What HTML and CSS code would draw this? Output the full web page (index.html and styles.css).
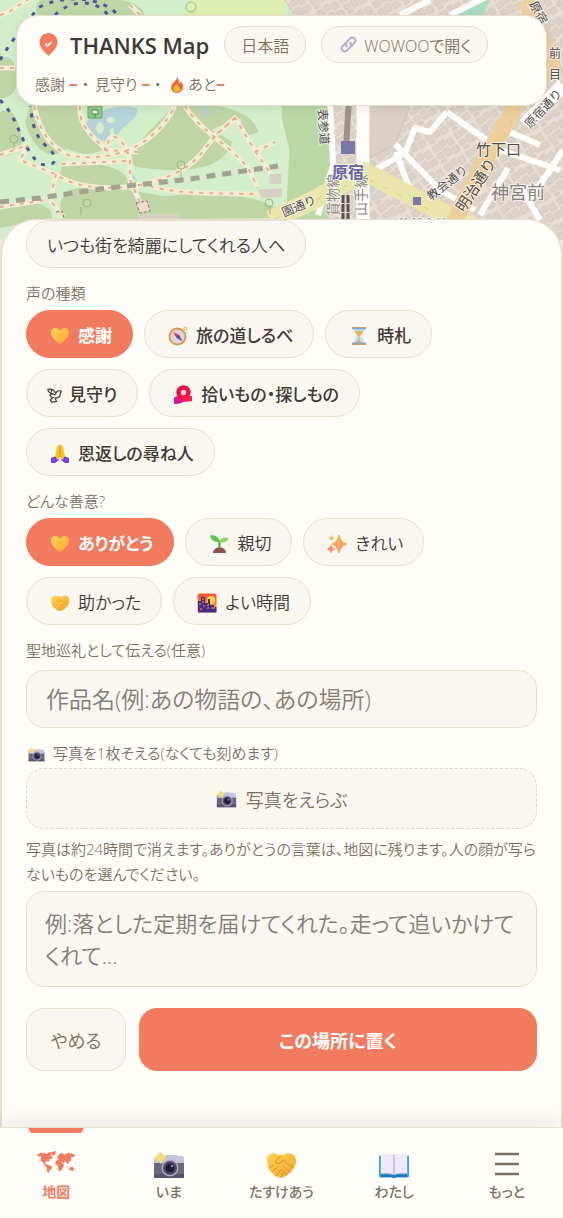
FILE: index.html
```html
<!DOCTYPE html>
<html lang="ja">
<head>
    <meta charset="UTF-8">
    <meta name="viewport" content="width=device-width, initial-scale=1">
    <title>THANKS Map</title>
    <link rel="stylesheet" href="styles.css">
</head>
<body>
    <!-- icons -->
    <svg class="defs" aria-hidden="true">
        <defs>
            <linearGradient id="gold" x1="0" y1="0" x2="1" y2="1"><stop offset="0" stop-color="#ffd655"/><stop offset="1" stop-color="#f5a52d"/></linearGradient>
            <linearGradient id="spark" x1="0" y1="0" x2="0" y2="1"><stop offset="0" stop-color="#f9c440"/><stop offset="1" stop-color="#ff8a76"/></linearGradient>
            <linearGradient id="sky" x1="0" y1="0" x2="0" y2="1"><stop offset="0" stop-color="#f0523f"/><stop offset="1" stop-color="#ffad35"/></linearGradient>
            <symbol id="heart" viewBox="0 0 20 20"><path fill="url(#gold)" d="M10 18C7 16 1 11.500 1 6.500C1 3.500 3 2 5.500 2C7.500 2 9.200 3.200 10 5C10.800 3.200 12.500 2 14.500 2C17 2 19 3.500 19 6.500C19 11.500 13 16 10 18Z"/></symbol>
            <symbol id="compass" viewBox="0 0 20 20"><circle cx="17.500" cy="2.500" r="1.600" fill="none" stroke="#e8a33a"/><circle cx="9.500" cy="10.500" r="8" fill="#dcd4e8" stroke="#d99b45" stroke-width="2"/><path d="M5 6L11.500 9L8.500 12Z" fill="#d9485b"/><path d="M14.500 15.500L11.500 9L8.500 12Z" fill="#6b5fb0"/><circle cx="10" cy="10.500" r="1.200" fill="#54427a"/></symbol>
            <symbol id="glass" viewBox="0 0 20 20"><path d="M5 3H15C15 7 13.500 8.500 11.500 10C13.500 11.500 15 13.500 15 17H5C5 13.500 6.500 11.500 8.500 10C6.500 8.500 5 7 5 3Z" fill="#b9e3fa"/><path d="M6 5H14C13.500 7.500 12 8.500 10.500 10V14L14 17H6L9.500 14V10C8 8.500 6.500 7.500 6 5Z" fill="#f2b24b"/><path d="M3 1H17V3.500H3ZM3 16.500H17V19H3Z" fill="#8ba9cf"/><path d="M3 1H17V2H3ZM3 18H17V19H3Z" fill="#c99b66"/></symbol>
            <symbol id="dove" viewBox="0 0 20 20"><path d="M1 3C5 2 9 3 11 8C12 5 14 4 18 5L16.500 8C17 12 14 14 10 14L12 18L6 19L4 16L8 13C5 13 4 11 4 9L8 9L2 6ZM5 3L6 6M8 9L11 10" fill="none" stroke="#3d3935" stroke-width="1.500" stroke-linejoin="round"/></symbol>
            <symbol id="knot" viewBox="0 0 20 20"><path d="M1 13C4 10 11 10 14 14C11 18 6 19 1 19Z" fill="#dc1592"/><circle cx="10.500" cy="7.500" r="5" fill="#f9cfd6" stroke="#e71445" stroke-width="4.500"/><path d="M8 11L19 11V16L12 17Z" fill="#ff1c43"/></symbol>
            <symbol id="pray" viewBox="0 0 20 20"><path d="M1 14L6 12L9 16L5 19H1Z" fill="#7938f3"/><path d="M19 14L14 12L11 16L15 19H19Z" fill="#7938f3"/><path d="M9.700 0.500C7.500 0.500 7 3 6.500 6L5 12L7.500 16L10 13L12.500 16L15 12L13.500 6C13 3 12.500 0.500 10.300 0.500Z" fill="#ffc12e"/><path d="M10 2V13" stroke="#e69419"/></symbol>
            <symbol id="sprout" viewBox="0 0 20 20"><path d="M4 19C4 15.500 7 13.500 10.500 13.500C14 13.500 17 15.500 17 19Z" fill="#8a5350"/><path d="M10.500 14V6.500" stroke="#44ad3c" stroke-width="2"/><path d="M10.500 8C5 9 1.500 5 1 1.500C6 0.500 10 3 10.500 8Z" fill="#5cc451"/><path d="M10.500 8C11 4 15 2.500 19.500 4C18.500 8 14 9.500 10.500 8Z" fill="#86d95c"/></symbol>
            <symbol id="sparkle" viewBox="0 0 20 20"><path d="M12 1Q13.500 8 19.500 10Q13.500 12 12 19Q10.500 12 5 10Q10.500 8 12 1Z" fill="url(#spark)" stroke="#fca75c"/><path d="M4.500 1Q5 3.500 7.500 4Q5 4.500 4.500 7Q4 4.500 1.500 4Q4 3.500 4.500 1Z" fill="#e6b25d"/><path d="M4 11.500Q4.500 14.500 7.500 15Q4.500 15.500 4 18.500Q3.500 15.500 0.500 15Q3.500 14.500 4 11.500Z" fill="#ff8577" stroke="#ff8577"/></symbol>
            <symbol id="shake" viewBox="0 0 34 30"><path d="M2 11C1 5 6 1 12 3L17 5L22 3C28 1 34 5 33 12C32 18 28 23 22 27C17 30 11 28 8 24C4 21 2 16 2 11Z" fill="url(#gold)"/><path d="M17 5L11 11C12 15 17 13 19 10L30 18M5 18L9 15M8 22L13 17M12 26L17 20M17 28L20 23M26 22L20 17M23 25L18 20" fill="none" stroke="#e39a26" stroke-width="1.200" stroke-linecap="round"/></symbol>
            <symbol id="city" viewBox="0 0 20 20"><rect x="0.500" y="0.500" width="19" height="19" rx="2" fill="url(#sky)"/><circle cx="14" cy="7" r="4" fill="#ffd348"/><path d="M1 8H4V4H8V10H11V6H13V12H17V14H19.500V19.500H1Z" fill="#4a2a7c"/><path d="M5 6H7M5 9H7M2 11H4M6 13H8M10 12H12M10 15H12M14 15H18M3 16H5" stroke="#fe9d79" stroke-width="1.200"/></symbol>
            <symbol id="camera" viewBox="0 0 32 28"><path d="M1 9H31V26H1Z" fill="#6b6679"/><path d="M1 12V8Q1 6 3 6H10L13 4H24L26 5H29Q31 5 31 8V12Z" fill="#c5c2dc"/><path d="M1 23H31V27H1Z" fill="#57536a"/><circle cx="17" cy="17" r="8.500" fill="#b2adc8"/><circle cx="17" cy="17" r="7" fill="#504b68"/><circle cx="17" cy="17" r="4.500" fill="#211b36"/><circle cx="19" cy="15" r="1.300" fill="#918ab6"/><path d="M7 1L13 6L8 13L2 7Z" fill="#fbda73"/></symbol>
            <symbol id="book" viewBox="0 0 34 28"><path d="M1 4H33V27H1Z" fill="#3ba5df"/><path d="M3 24H31V27H20L17 28L14 27H3Z" fill="#1979bc"/><path d="M3 3Q10 1 17 3Q24 1 31 3V23Q24 22 17 24Q10 22 3 23Z" fill="#f0eaf8"/><path d="M17 3V24" stroke="#bcb1d0" stroke-width="1.500"/><path d="M3 23Q10 22 17 24Q24 22 31 23" fill="none" stroke="#c9bddb"/></symbol>
            <symbol id="world" viewBox="0 0 44 24"><path fill="#f27a5f" d="M1 4L5 2L12 3L15 1L18 2L16 5L19 7L15 9L14 12L11 11L10 14L13 15L18 17L17 20L15 21L14 24L12 22L12 18L10 16L8 13L5 10L6 6L3 6ZM17 1L22 0L21 4L18 5ZM23 7L25 4L28 2L31 4L36 2L43 4L42 6L38 7L39 10L36 12L35 15L32 11L30 14L28 11L29 14L31 15L28 21L25 22L24 16L21 14L22 11L25 9ZM34 16L36 17L35 18ZM37 18L40 17L42 20L40 22L36 20ZM43 22L44 21L44 23ZM2 11L4 11L3 12Z"/></symbol>
            <symbol id="flame" viewBox="0 0 16 18"><path d="M8 0C8 4 3 5 1.500 10C0.500 15 4 18 8 18C13 18 15.500 14 14.500 9C14 7 13.500 5.500 12 5C12 7 11 8 10.500 7C10 4 10 2 8 0Z" fill="#f5632f"/><path d="M8 7C5 10 3.500 12 4 15C5 17.500 11 18 12 14.500C12.500 12 9 11 8 7Z" fill="#ffbc38"/></symbol>
            <symbol id="link" viewBox="0 0 18 18"><g fill="none" stroke="#b8acd0" stroke-width="2.200" stroke-linecap="round"><path d="M7 11C5.500 9.500 5.500 8 7 6.500L11 2.500C14 0 18 4 15.500 7L12 10.500"/><path d="M11 7C12.500 8.500 12.500 10 11 11.500L7 15.500C4 18 0 14 2.500 11L6 7.500"/></g></symbol>
            <pattern id="houses" width="26" height="22" patternUnits="userSpaceOnUse" patternTransform="rotate(-32)"><rect width="26" height="22" fill="#e7dfd6"/><path d="M2 2H9V8H2ZM11 1H16V7H11ZM18 3H24V10H18ZM2 11H8V16H2ZM10 10H16V18H10ZM18 13H25V19H18ZM3 18H8V21H3Z" fill="#dcd2c7" stroke="#cfc2b5" stroke-width="0.700"/></pattern>
            <!-- park footpaths, drawn twice: bed and dashes -->
            <g id="paths">
                <path d="M34 106C40 130 48 145 68 155C100 162 150 155 175 106M0 155L28 145L20 160L55 174C88 198 170 190 200 155L215 136L235 118L257 154L275 180"/>
                <path d="M80 106C78 125 93 138 107 150C108 125 125 139 130 160L130 180L142 207M185 106C202 133 230 145 248 168L258 188M62 164L128 161M150 186C180 195 220 193 260 194M56 174L50 200L63 217M0 207L45 200"/>
                <path d="M0 68H15M0 15C15 12 20 0 40 -5M130 5L140 15M104 150L138 152M235 118L213 137M255 152L275 142"/>
            </g>
        </defs>
    </svg>

    <main class="screen">
        <svg class="map" viewBox="0 0 563 240" preserveAspectRatio="xMidYMin slice" aria-label="原宿周辺の地図">
            <rect width="563" height="240" fill="#d2eecb"/>
            <!-- woods -->
            <g fill="#bfd5a6">
                <path d="M40 0H120C150 5 150 20 130 30H60C40 25 30 10 40 0ZM0 60C12 50 20 70 16 88C10 100 0 98 0 98Z"/>
                <path d="M0 112C12 105 20 120 22 142C18 158 0 156 0 156ZM30 106C55 102 55 130 66 150C45 165 30 140 25 122Z"/>
                <path d="M37 106H80C76 125 92 140 106 147C90 160 66 152 55 140ZM174 106H188C204 132 224 134 232 142C224 170 186 174 136 167C122 155 144 137 174 106ZM182 106C202 100 254 108 258 132C244 140 238 130 242 118L208 131Z"/>
                <path d="M62 165C85 160 130 165 128 184C100 190 75 185 60 176ZM70 190C110 180 145 196 170 196C220 188 282 200 282 218L66 220C56 208 60 198 70 190ZM0 210C20 196 55 202 52 218L0 228Z"/>
            </g>
            <path d="M190 0H284V45H184C175 30 183 12 190 0Z" fill="#dcefb0"/>
            <path d="M282 106H340V220H282Z" fill="#b9d8a5"/>
            <path d="M274 106L285 150L282 205" stroke="#d7edcb" stroke-width="9" fill="none"/>
            <path d="M86 124C94 108 122 104 137 108C139 122 120 124 116 139C104 146 91 137 86 124Z" fill="#b6d3d8"/>
            <g fill="#d2eecb"><ellipse cx="100" cy="128" rx="4" ry="6"/><ellipse cx="111" cy="120" rx="5" ry="3"/><ellipse cx="112" cy="133" rx="2" ry="5"/></g>
            <path d="M200 106C210 106 212 115 206 117ZM130 170L137 180L128 178Z" fill="#b1d0db"/>
            <!-- town -->
            <path d="M284 0H563V240H330V106L320 60Z" fill="url(#houses)"/>
            <path d="M461 8L490 0L482 16H455Z" fill="#a7ddc1"/>
            <path d="M369 106H410L394 145L370 158Z" fill="#dbd0c5" stroke="#cbbfb4"/>
            <g fill="none" stroke="#fffdfa" stroke-linejoin="round">
                <path d="M363 100V240" stroke-width="13"/>
                <path d="M330 100L333 165L318 215" stroke-width="6"/>
                <path d="M366 175L405 153L415 128L430 132L447 112M395 144L440 190L475 210M447 112L500 150L560 170M396 152L408 185L430 210M508 168L480 215M530 200L563 150" stroke-width="6"/>
                <path d="M400 15L430 0M450 15L490 -5M520 185L540 220M505 130L540 145" stroke-width="6"/>
            </g>
            <path d="M270 220L310 202L365 172L450 216L500 240" fill="none" stroke="#e9e5ab" stroke-width="19"/>
            <path d="M448 235L482 165L519 100L552 65L526 0" fill="none" stroke="#eccf9b" stroke-width="17"/>
            <path d="M470 205L519 106M370 180L430 210M275 219L350 184" fill="none" stroke="#d9c594" stroke-dasharray="5 10"/>
            <path d="M525 125L563 85" stroke="#fff" stroke-width="14"/>
            <use href="#paths" class="bed"/>
            <use href="#paths" class="dashes"/>
            <path d="M0 202L40 198L100 189L190 179L278 166" fill="none" stroke="#a3a293" stroke-width="5" stroke-dasharray="9 7"/>
            <g fill="none" stroke="#4b569f" stroke-width="3" stroke-dasharray="4 7"><path d="M0 60C15 35 25 25 38 8C60 -5 100 -5 118 15M0 100C20 120 18 140 38 163C55 170 62 158 45 145C32 132 33 120 30 106"/><path d="M55 15C70 0 95 -2 108 15"/></g>
            <path d="M88 106H102V118H88Z" fill="#91c68c" stroke="#66a767"/><path d="M92 110H98V114H92ZM95 114V118" fill="#eef5de" stroke="#4f8e50"/>
            <path d="M136 203L147 201L150 211L140 213ZM56 212L62 211L64 218" fill="#f0dccc" stroke="#867467" stroke-dasharray="3 2"/>
            <path d="M138 214H178L181 220H138ZM258 190L282 188V197L262 198ZM270 174H281V184H269Z" fill="#d5cfc4"/>
            <g fill="none" stroke="#9cb785"><circle cx="14" cy="139" r="4"/><path d="M14 143V150M81 207V215"/><circle cx="87" cy="203" r="4"/><circle cx="181" cy="165" r="4"/><path d="M181 169V177M270 207V214"/><circle cx="269" cy="203" r="4"/><circle cx="191" cy="7" r="5"/></g>
            <path d="M347 106L345 141M350 106L348 141" stroke="#9a938a" stroke-width="3"/>
            <path d="M343 195V220M348 195V220" stroke="#56514c" stroke-width="3" stroke-dasharray="8 1"/>
            <path d="M341 141H355V154H341ZM413 197H421V205H413Z" fill="#7878a8"/>
            <g class="map-text">
                <text transform="translate(338 216) rotate(-90)" class="rail">貨物線</text>
                <text transform="translate(366 216) rotate(-90)" class="rail">山手線</text>
                <text x="332" y="178" class="station">原宿</text>
                <text x="476" y="155" class="place">竹下口</text>
                <text x="491" y="199" class="area">神宮前</text>
                <text transform="translate(431 201) rotate(-38)" class="road">教会通り</text>
                <text transform="translate(464 213) rotate(-57)" class="road big">明治通り</text>
                <text transform="translate(530 129) rotate(-47)" class="road">原宿通り</text>
                <text transform="translate(284 217) rotate(-23)" class="road">園通り</text>
                <text transform="translate(318 109) rotate(86)" class="road">表参道</text>
                <text x="387" y="229" class="station small">明治神宮前</text>
                <text x="549" y="58" class="road">前</text>
                <text x="549" y="79" class="road">目</text>
                <text transform="translate(529 4) rotate(62)" class="road">原宿</text>
            </g>
        </svg>

        <header class="topbar">
            <div class="topbar-row">
                <svg class="pin" viewBox="0 0 18 23" aria-hidden="true"><path d="M9 0C14 0 18 4 18 9C18 15 12 20 9 23C6 20 0 15 0 9C0 4 4 0 9 0Z" fill="#f27a5f"/><path d="M6 11L8 13L12 9" fill="none" stroke="#fff" stroke-width="1.600" stroke-linecap="round"/></svg>
                <h1>THANKS Map</h1>
                <button class="mini">日本語</button>
                <button class="mini open"><svg aria-hidden="true"><use href="#link"/></svg>WOWOOで開く</button>
            </div>
            <p class="stats"><span>感謝 <b>–</b><i>・</i></span><span>見守り <b>–</b><i>・</i></span><span><svg aria-hidden="true"><use href="#flame"/></svg>あと<b>–</b></span></p>
        </header>

        <form class="sheet">
            <div class="chips">
                <button type="button" class="chip">いつも街を綺麗にしてくれる人へ</button>
            </div>

            <h2 class="label">声の種類</h2>
            <div class="chips kinds">
                <button type="button" class="chip on" aria-pressed="true"><svg aria-hidden="true"><use href="#heart"/></svg>感謝</button>
                <button type="button" class="chip"><svg aria-hidden="true"><use href="#compass"/></svg>旅の道しるべ</button>
                <button type="button" class="chip"><svg aria-hidden="true"><use href="#glass"/></svg>時札</button>
                <button type="button" class="chip slim"><svg aria-hidden="true"><use href="#dove"/></svg>見守り</button>
                <button type="button" class="chip"><svg aria-hidden="true"><use href="#knot"/></svg>拾いもの・探しもの</button>
                <button type="button" class="chip"><svg aria-hidden="true"><use href="#pray"/></svg>恩返しの尋ね人</button>
            </div>

            <h2 class="label">どんな善意?</h2>
            <div class="chips moods">
                <button type="button" class="chip on" aria-pressed="true"><svg aria-hidden="true"><use href="#heart"/></svg>ありがとう</button>
                <button type="button" class="chip"><svg aria-hidden="true"><use href="#sprout"/></svg>親切</button>
                <button type="button" class="chip"><svg aria-hidden="true"><use href="#sparkle"/></svg>きれい</button>
                <button type="button" class="chip"><svg aria-hidden="true"><use href="#shake"/></svg>助かった</button>
                <button type="button" class="chip"><svg aria-hidden="true"><use href="#city"/></svg>よい時間</button>
            </div>

            <label class="label" for="work">聖地巡礼として伝える(任意)</label>
            <input class="field" id="work" type="text" placeholder="作品名(例:あの物語の、あの場所)">

            <h2 class="label photo-label"><svg aria-hidden="true"><use href="#camera"/></svg>写真を1枚そえる(なくても刻めます)</h2>
            <button type="button" class="photo"><svg aria-hidden="true"><use href="#camera"/></svg>写真をえらぶ</button>
            <p class="help">写真は約24時間で消えます。ありがとうの言葉は、地図に残ります。人の顔が写らないものを選んでください。</p>

            <textarea class="field message" aria-label="メッセージ" rows="2" placeholder="例:落とした定期を届けてくれた。走って追いかけてくれて…"></textarea>

            <div class="actions">
                <button type="button" class="cancel">やめる</button>
                <button type="submit" class="submit">この場所に置く</button>
            </div>
        </form>
    </main>

    <nav class="tabs">
        <a href="#map" class="active" aria-current="page"><svg class="wide" aria-hidden="true"><use href="#world"/></svg>地図</a>
        <a href="#now"><svg aria-hidden="true"><use href="#camera"/></svg>いま</a>
        <a href="#help"><svg aria-hidden="true"><use href="#shake"/></svg>たすけあう</a>
        <a href="#me"><svg aria-hidden="true"><use href="#book"/></svg>わたし</a>
        <a href="#more"><svg viewBox="0 0 32 28" aria-hidden="true"><path d="M4 3H28M4 13H28M4 23H28" stroke="#7c7063" stroke-width="2.500"/></svg>もっと</a>
    </nav>
</body>
</html>
```
FILE: styles.css
```css
:root {
    --coral: #f27a5f;
    --paper: #fffef9;
    --cream: #faf6f0;
    --line: #e8decd;
    --ink: #3d3935;
    --muted: #7c7063;
}
* {
    box-sizing: border-box;
}
body {
    margin: 0;
    min-height: 100vh;
    display: flex;
    flex-direction: column;
    background: #eee8dd;
    color: var(--ink);
    font-family: "Open Sans", "Noto Sans CJK JP", sans-serif;
    font-weight: 350;
    font-feature-settings: "palt";
}
button, input, textarea {
    font: inherit;
    font-feature-settings: inherit;
    color: inherit;
}
button {
    cursor: pointer;
    white-space: nowrap;
}
h1, h2, p {
    margin: 0;
}
.defs {
    position: absolute;
    width: 0;
    height: 0;
}
.screen {
    position: relative;
    flex: 1;
    display: flex;
    flex-direction: column;
}

/* map */
.map {
    position: absolute;
    top: 0;
    left: 0;
    width: 100%;
    height: 240px;
}
.bed {
    fill: none;
    stroke: #f3edd2;
    stroke-width: 5px;
    stroke-linejoin: round;
}
.dashes {
    fill: none;
    stroke: #e9ab98;
    stroke-width: 2px;
    stroke-dasharray: 4 6;
}
.map-text {
    font-size: 13px;
    font-weight: 400;
    fill: #514b46;
    stroke: #fff;
    stroke-width: 2px;
    stroke-opacity: 0.7;
    paint-order: stroke;
    font-feature-settings: normal;
}
.station {
    font-size: 16px;
    font-weight: 700;
    fill: #6767a5;
}
.small {
    font-size: 12px;
}
.place {
    font-size: 15px;
}
.area {
    font-size: 18px;
    fill: #88817b;
}
.road {
    font-size: 12px;
}
.big {
    font-size: 15px;
}
.rail {
    font-size: 14px;
    fill: #8a8580;
}

/* header card */
.topbar {
    position: relative;
    margin: 15px 16px 0;
    padding: 10px 18px 8px;
    border: 1px solid var(--line);
    border-radius: 22px;
    background: var(--paper);
    box-shadow: 0 2px 8px rgba(90, 75, 50, 0.12);
}
.topbar-row {
    display: flex;
    align-items: center;
    gap: 15px;
}
.pin {
    width: 19px;
    height: 23px;
    margin: 0 -3px 0 4px;
}
h1 {
    font-size: 22px;
    line-height: 32px;
    font-weight: 600;
    white-space: nowrap;
}
.mini {
    display: flex;
    align-items: center;
    height: 37px;
    padding: 0 16px;
    border: 1px solid var(--line);
    border-radius: 19px;
    background: var(--cream);
    color: var(--muted);
    font-size: 16px;
}
.mini svg {
    width: 17px;
    height: 17px;
    margin: 0 7px 0 2px;
}
.stats {
    display: flex;
    gap: 2px;
    margin-top: 8px;
    font-size: 15px;
    line-height: 26px;
    color: var(--muted);
}
.stats b {
    color: var(--coral);
    font-size: 18px;
    line-height: 18px;
}
.stats i {
    font-style: normal;
    font-feature-settings: normal;
}
.stats svg {
    width: 14px;
    height: 16px;
    margin: 0 4px 0 3px;
    vertical-align: -3px;
}

/* bottom sheet */
.sheet {
    position: relative;
    display: flex;
    flex-direction: column;
    margin-top: auto;
    padding: 0 24px 56px;
    border: 1px solid var(--line);
    border-width: 1px 2px 0;
    border-radius: 36px 36px 0 0;
    background: var(--paper);
}
.chips {
    display: flex;
    flex-wrap: wrap;
    gap: 11px;
}
.chip {
    display: flex;
    align-items: center;
    height: 48px;
    padding: 0 20px;
    border: 1px solid var(--line);
    border-radius: 24px;
    background: var(--cream);
    font-size: 17px;
}
.chip svg {
    width: 20px;
    height: 20px;
    margin: 3px 8px 0 3px;
}
.chip.slim svg {
    width: 16px;
    height: 18px;
    margin: 3px 6px 0 0;
}
.kinds .chip {
    font-weight: 500;
}
.chips .on {
    border-color: var(--coral);
    background: var(--coral);
    color: #fff;
    font-weight: 700;
}
.label {
    margin: 14px 0 6px;
    color: var(--muted);
    font-size: 15px;
    line-height: 22px;
    font-weight: inherit;
}
.field {
    width: 100%;
    height: 58px;
    padding: 0 19px;
    border: 1px solid var(--line);
    border-radius: 18px;
    background: var(--cream);
    font-size: 23px;
    margin-top: 3px;
}
.field::placeholder {
    color: #827d77;
    opacity: 1;
}
.photo-label svg {
    width: 17px;
    height: 15px;
    margin: 0 8px 0 2px;
    vertical-align: -3px;
}
.photo {
    display: flex;
    align-items: center;
    justify-content: center;
    height: 61px;
    border: 1px dashed #dfd6ca;
    border-radius: 18px;
    background: var(--cream);
    color: var(--muted);
    font-size: 18px;
}
.photo svg {
    width: 21px;
    height: 18px;
    margin-right: 9px;
}
.photo-label {
    margin-bottom: 4px;
}
.help {
    margin: 8px 0 4px;
    color: var(--muted);
    font-size: 15px;
    line-height: 25px;
}
.message {
    height: 96px;
    margin: 0;
    padding: 15px 18px;
    font-size: 22px;
    line-height: 32px;
    resize: none;
    overflow: hidden;
}
.actions {
    display: flex;
    gap: 13px;
    margin-top: 21px;
}
.actions button {
    height: 63px;
    border: 1px solid var(--line);
    border-radius: 18px;
    font-size: 18px;
}
.actions .cancel {
    width: 100px;
    background: var(--cream);
    color: var(--muted);
}
.actions .submit {
    flex: 1;
    border-color: var(--coral);
    background: var(--coral);
    color: #fff;
    font-weight: 700;
}

/* tab bar */
.tabs {
    position: relative;
    display: grid;
    grid-template-columns: repeat(5, 1fr);
    height: 91px;
    border-top: 1px solid var(--line);
    background: var(--paper);
    box-shadow: 0 -4px 24px rgba(90, 75, 50, 0.14);
}
.tabs a {
    display: flex;
    flex-direction: column;
    align-items: center;
    padding-top: 23px;
    color: var(--muted);
    font-size: 14px;
    line-height: 22px;
    font-weight: 500;
    text-decoration: none;
}
.tabs svg {
    width: 32px;
    height: 28px;
    margin-bottom: 2px;
}
.tabs .wide {
    width: 42px;
    height: 22px;
    margin-bottom: 8px;
}
.tabs .active {
    position: relative;
    color: var(--coral);
    font-weight: 700;
}
.tabs .active::before {
    content: "";
    position: absolute;
    top: 0;
    width: 54px;
    height: 5px;
    border-radius: 0 0 4px 4px;
    background: var(--coral);
}
```
